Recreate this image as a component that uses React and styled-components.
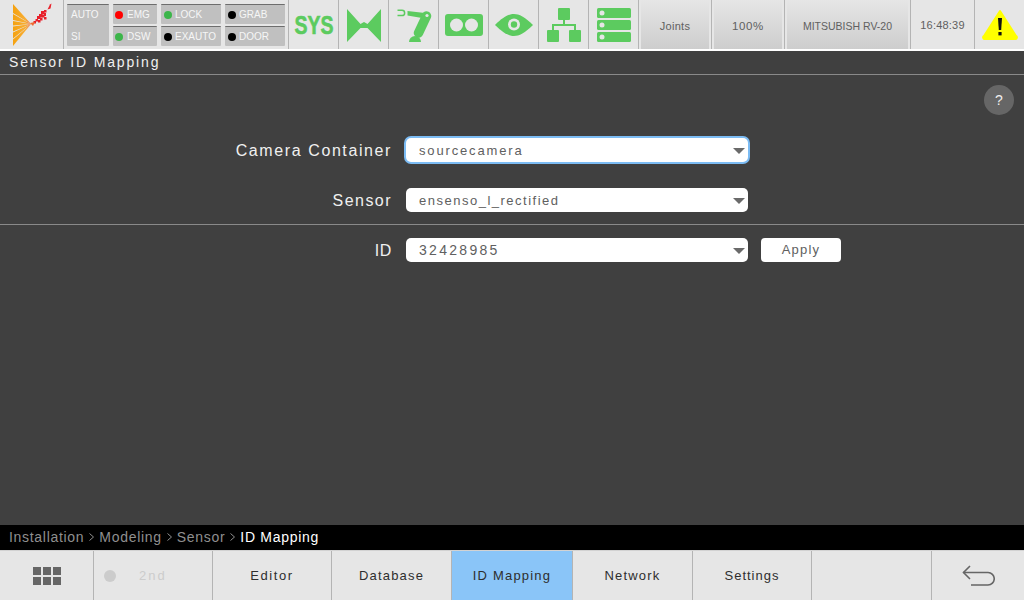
import React from 'react';
import styled, { createGlobalStyle } from 'styled-components';

const GlobalStyle = createGlobalStyle`
  html, body {
    margin: 0;
    padding: 0;
    background: #404040;
  }
  * {
    box-sizing: border-box;
  }
`;

const GREEN = '#5ccb5f';

// Page frame
const Page = styled.div`
  width: 1024px;
  height: 600px;
  display: flex;
  flex-direction: column;
  overflow: hidden;
  background: #404040;
  font-family: "Liberation Sans", Arial, sans-serif;
`;

// Top status bar
const TopBar = styled.header`
  height: 51px;
  flex: none;
  display: flex;
  background: #e6e6e6;
  border-bottom: 2px solid #ffffff;
`;

const LogoCell = styled.div`
  width: 64px;
  flex: none;
  display: flex;
  border-right: 1px solid #b4b4b4;
`;

const StatusCell = styled.div`
  width: 225px;
  flex: none;
  padding: 4px 0 0 3px;
  display: flex;
  gap: 4px;
  border-right: 1px solid #b4b4b4;
`;

const StatusColumn = styled.div`
  width: ${(p) => p.$width}px;
  display: flex;
  flex-direction: column;
  gap: 2px;
`;

const StatusTile = styled.div`
  height: 20px;
  display: flex;
  align-items: center;
  gap: ${(p) => (p.$tight ? 4 : 3)}px;
  padding-left: ${(p) => (p.$tight ? 2 : 3)}px;
  background: #c0c0c0;
  border-top: 1px solid #6d6d6d;
  border-radius: 1px;
  color: #f6f6f6;
  font-size: 10px;
`;

const ModeTile = styled.div`
  height: 42px;
  display: flex;
  flex-direction: column;
  justify-content: space-between;
  padding: 4px 0 3px 4px;
  background: #c0c0c0;
  border-top: 1px solid #6d6d6d;
  border-radius: 1px;
  color: #f6f6f6;
  font-size: 10px;
  line-height: 12px;
`;

const Dot = styled.span`
  width: 8px;
  height: 8px;
  flex: none;
  border-radius: 50%;
  background: ${(p) => p.$color};
`;

const IconCell = styled.div`
  width: 50px;
  flex: none;
  display: flex;
  align-items: center;
  justify-content: center;
  border-right: 1px solid #b4b4b4;
`;

const SysLabel = styled.span`
  display: inline-block;
  padding: 1px 0 0 1px;
  color: ${GREEN};
  font-size: 25px;
  font-weight: 700;
  -webkit-text-stroke: 0.6px ${GREEN};
  transform: scaleX(0.78);
`;

const GradientCell = styled.div`
  width: ${(p) => p.$width}px;
  flex: none;
  display: flex;
  padding: 0 2px 0 2px;
  border-right: 1px solid #b4b4b4;
`;

const GradientButton = styled.div`
  flex: 1;
  display: flex;
  align-items: center;
  justify-content: center;
  padding-top: 2px;
  background: linear-gradient(#e6e6e6, #cdcdcd);
  color: #606060;
  font-size: ${(p) => p.$size || 11}px;
  letter-spacing: ${(p) => p.$tracking || 0}px;
`;

const ClockCell = styled.div`
  width: 64px;
  flex: none;
  display: flex;
  align-items: center;
  justify-content: center;
  border-right: 1px solid #b4b4b4;
  color: #606060;
  font-size: 11px;
  letter-spacing: 0.2px;
`;

const WarningCell = styled.div`
  flex: 1;
  display: flex;
  align-items: center;
  justify-content: center;
`;

// Title
const TitleBar = styled.div`
  height: 24px;
  flex: none;
  padding: 0 0 1px 9px;
  display: flex;
  align-items: center;
  border-bottom: 1px solid #8a8a8a;
  color: #f0f0f0;
  font-size: 14px;
  letter-spacing: 1.85px;
`;

// Main form area
const Content = styled.main`
  position: relative;
  flex: 1;
  display: flex;
  flex-direction: column;
  padding-top: 63px;
`;

const HelpButton = styled.div`
  position: absolute;
  top: 10px;
  right: 10px;
  width: 30px;
  height: 30px;
  border-radius: 50%;
  display: flex;
  align-items: center;
  justify-content: center;
  background: #666666;
  color: #f0f0f0;
  font-size: 14px;
`;

const FormRow = styled.div`
  height: 24px;
  display: flex;
  align-items: center;
  margin-bottom: ${(p) => p.$gap || 0}px;
`;

const Label = styled.label`
  width: 392px;
  flex: none;
  padding-top: 2px;
  text-align: right;
  color: #f0f0f0;
  font-size: 16px;
  letter-spacing: ${(p) => p.$tracking}px;
`;

const Select = styled.div`
  width: 342px;
  height: 24px;
  margin-left: 14px;
  flex: none;
  position: relative;
  display: flex;
  align-items: center;
  padding-left: 13px;
  background: #ffffff;
  border-radius: 5px;
  color: #606060;
  font-size: ${(p) => p.$size || 13}px;
  letter-spacing: ${(p) => p.$tracking}px;
  box-shadow: ${(p) => (p.$focused ? '0 0 0 2px #7cbcf4' : 'none')};
`;

const Caret = styled.span`
  position: absolute;
  right: 3px;
  top: 10px;
  width: 0;
  height: 0;
  border-left: 6px solid transparent;
  border-right: 6px solid transparent;
  border-top: 6px solid #6a6a6a;
`;

const ApplyButton = styled.button`
  width: 80px;
  height: 24px;
  margin-left: 13px;
  padding: 0 0 2px;
  border: 0;
  border-radius: 4px;
  background: #ffffff;
  color: #606060;
  font-family: inherit;
  font-size: 13px;
  letter-spacing: 1.2px;
`;

const Divider = styled.div`
  height: 1px;
  flex: none;
  margin: 12px 0 13px;
  background: #8a8a8a;
`;

// Breadcrumb
const Breadcrumb = styled.nav`
  height: 25px;
  flex: none;
  padding: 0 0 1px 9px;
  display: flex;
  align-items: center;
  gap: 5px;
  background: #000000;
  font-size: 14px;
  letter-spacing: 0.7px;
`;

const Crumb = styled.span`
  color: ${(p) => (p.$current ? '#ffffff' : '#8f8f8f')};
`;

// Bottom tabs
const TabBar = styled.div`
  height: 50px;
  flex: none;
  display: flex;
  background: #e6e6e6;
  border-top: 1px solid #d2d2d2;
`;

const Tab = styled.div`
  width: ${(p) => p.$width}px;
  flex: none;
  display: flex;
  align-items: center;
  justify-content: center;
  border-right: 1px solid #b4b4b4;
  background: ${(p) => (p.$active ? '#8ac5f8' : 'transparent')};
  color: #2e2e2e;
  font-size: 13px;
  letter-spacing: ${(p) => p.$tracking || 1.2}px;
`;

const SecondTab = styled(Tab)`
  justify-content: flex-start;
  gap: 23px;
  padding-left: 10px;
  color: #cccccc;
  letter-spacing: 2px;
`;

const LastTab = styled(Tab)`
  flex: 1;
  border-right: 0;
`;

const SecondDot = styled.span`
  width: 12px;
  height: 12px;
  border-radius: 50%;
  background: #cccccc;
`;

const GridIcon = () => (
  <svg width="28" height="18" viewBox="0 0 28 18" fill="#666666">
    {[0, 10, 20].map((x) =>
      [0, 10].map((y) => <rect key={`${x}-${y}`} x={x} y={y} width="8" height="8" />)
    )}
  </svg>
);

const BackIcon = () => (
  <svg width="33" height="22" viewBox="0 0 33 22" fill="none" stroke="#666666" strokeWidth="1.6">
    <path d="M8 1 L1.5 7.5 L8 14" />
    <path d="M1.5 7.5 H26 A6 6 0 0 1 26 20 H9" />
  </svg>
);

const Chevron = () => (
  <svg width="5" height="8" viewBox="0 0 5 8" fill="none" stroke="#8f8f8f" strokeWidth="1">
    <path d="M0.5 0.5 L4.5 4 L0.5 7.5" />
  </svg>
);

const Logo = () => (
  <svg width="63" height="49" viewBox="0 0 63 49">
    <defs>
      <linearGradient id="fanFill" x1="13" y1="0" x2="31" y2="0" gradientUnits="userSpaceOnUse">
        <stop offset="0" stopColor="#f5a20f" />
        <stop offset="0.7" stopColor="#f7ad35" />
        <stop offset="1" stopColor="#ef6a3a" />
      </linearGradient>
    </defs>
    <g fill="url(#fanFill)">
      <path d="M13 4 L31 24 L13 13 Z" />
      <path d="M13 14 L31 24 L13 20 Z" />
      <path d="M13 21 L31 24 L13 25.5 Z" />
      <path d="M13 26.5 L31 24 L13 31.5 Z" />
      <path d="M13 32.5 L31 24 L13 38.5 Z" />
      <path d="M13 39.5 L31 24 L13 46 Z" />
    </g>
    <g fill="#e8202a">
      <path d="M50 4.5 L51.5 3.5 L50.5 8.5 L47.5 9.5 Z" />
      <rect x="44" y="10" width="2.5" height="2.5" />
      <rect x="41" y="11" width="3.5" height="3.5" />
      <rect x="44" y="13" width="2" height="3" />
      <rect x="39" y="14" width="3.5" height="3.5" />
      <rect x="42" y="15" width="2.5" height="2.5" />
      <rect x="37" y="16" width="3.5" height="3" />
      <rect x="44" y="17" width="2.5" height="2.5" />
      <rect x="40" y="18" width="2.5" height="2.5" />
      <rect x="35.5" y="19" width="2.5" height="2.5" />
      <rect x="38" y="20" width="2.5" height="2.5" />
      <rect x="33.5" y="21" width="2.5" height="2.5" />
      <path d="M30 23 L35 22 L33 26 Z" fill="#ee6a30" />
    </g>
  </svg>
);

const MIcon = () => (
  <svg width="36" height="36" viewBox="0 0 36 36" fill={GREEN}>
    <path d="M1 2 L14.5 17 L18 15 L21.5 17 L35 2 V35 L21.5 21 H14.5 L1 35 Z" />
  </svg>
);

const RobotIcon = () => (
  <svg width="36" height="36" viewBox="0 0 36 36" fill={GREEN}>
    <path d="M1.5 2.5 H6 A3.4 3.4 0 0 1 6 9.3 H1.5 V7.8 H6 A1.9 1.9 0 0 0 6 4 H1.5 Z" />
    <path d="M11.5 4 L29 6 L26 11 L11.5 8.5 Z" />
    <path d="M30.5 9 L22.5 26" stroke={GREEN} strokeWidth="9.5" strokeLinecap="round" />
    <circle cx="31" cy="8.5" r="1.6" fill="#e6e6e6" />
    <path d="M13 35 A6 6 0 0 1 25 35 Z" />
  </svg>
);

const ContainerIcon = () => (
  <svg width="38" height="22" viewBox="0 0 38 22">
    <rect width="38" height="22" rx="3" fill={GREEN} />
    <circle cx="11.5" cy="11" r="6.5" fill="#e6e6e6" />
    <circle cx="26.5" cy="11" r="6.5" fill="#e6e6e6" />
  </svg>
);

const EyeIcon = () => (
  <svg width="38" height="22" viewBox="0 0 38 22">
    <path d="M0 11 C8 3 14 0 19 0 C24 0 30 3 38 11 C30 19 24 22 19 22 C14 22 8 19 0 11 Z" fill={GREEN} />
    <circle cx="19" cy="10.5" r="6" fill="#e6e6e6" />
    <circle cx="19" cy="10.5" r="3.2" fill={GREEN} />
  </svg>
);

const NetworkIcon = () => (
  <svg width="34" height="34" viewBox="0 0 34 34" fill={GREEN}>
    <rect x="11" y="0" width="12" height="12" rx="1" />
    <rect x="0" y="22" width="12" height="12" rx="1" />
    <rect x="22" y="22" width="12" height="12" rx="1" />
    <path d="M16 12 H18 V16 H29 V22 H27 V18 H7 V22 H5 V16 H16 Z" />
  </svg>
);

const ServerIcon = () => (
  <svg width="34" height="34" viewBox="0 0 34 34">
    {[0, 12, 24].map((y) => (
      <g key={y}>
        <rect x="0" y={y} width="34" height="10" rx="1.5" fill={GREEN} />
        <circle cx="5" cy={y + 5} r="2.5" fill="#e6e6e6" />
      </g>
    ))}
  </svg>
);

const WarningIcon = () => (
  <svg width="36" height="31" viewBox="0 0 36 31">
    <path d="M18 2 L34 27 A1.6 1.6 0 0 1 33 30 H3 A1.6 1.6 0 0 1 2 27 Z" fill="#ffff00" stroke="#ffff00" strokeWidth="2" strokeLinejoin="round" />
    <path d="M16 9 H20 L19.2 21 H16.8 Z" fill="#111111" />
    <rect x="16.4" y="23" width="3.2" height="3.4" fill="#111111" />
  </svg>
);

const App = () => {
  return (
    <Page>
      <GlobalStyle />
      <TopBar>
        <LogoCell>
          <Logo />
        </LogoCell>
        <StatusCell>
          <StatusColumn $width={42}>
            <ModeTile>
              <span>AUTO</span>
              <span>SI</span>
            </ModeTile>
          </StatusColumn>
          <StatusColumn $width={44}>
            <StatusTile $tight><Dot $color="#ff0000" />EMG</StatusTile>
            <StatusTile $tight><Dot $color="#3cb54a" />DSW</StatusTile>
          </StatusColumn>
          <StatusColumn $width={60}>
            <StatusTile><Dot $color="#3cb54a" />LOCK</StatusTile>
            <StatusTile><Dot $color="#000000" />EXAUTO</StatusTile>
          </StatusColumn>
          <StatusColumn $width={60}>
            <StatusTile><Dot $color="#000000" />GRAB</StatusTile>
            <StatusTile><Dot $color="#000000" />DOOR</StatusTile>
          </StatusColumn>
        </StatusCell>
        <IconCell><SysLabel>SYS</SysLabel></IconCell>
        <IconCell><MIcon /></IconCell>
        <IconCell><RobotIcon /></IconCell>
        <IconCell><ContainerIcon /></IconCell>
        <IconCell><EyeIcon /></IconCell>
        <IconCell><NetworkIcon /></IconCell>
        <IconCell><ServerIcon /></IconCell>
        <GradientCell $width={73}><GradientButton $tracking={0.3}>Joints</GradientButton></GradientCell>
        <GradientCell $width={73}><GradientButton $size={11.5} $tracking={0.6}>100%</GradientButton></GradientCell>
        <GradientCell $width={126}><GradientButton $size={10.5}>MITSUBISH RV-20</GradientButton></GradientCell>
        <ClockCell>16:48:39</ClockCell>
        <WarningCell><WarningIcon /></WarningCell>
      </TopBar>

      <TitleBar>Sensor ID Mapping</TitleBar>

      <Content>
        <HelpButton>?</HelpButton>
        <FormRow $gap={26}>
          <Label $tracking={1.6}>Camera Container</Label>
          <Select $focused $tracking={1.85}>sourcecamera<Caret /></Select>
        </FormRow>
        <FormRow>
          <Label $tracking={1.45}>Sensor</Label>
          <Select $tracking={1.5}>ensenso_l_rectified<Caret /></Select>
        </FormRow>
        <Divider />
        <FormRow>
          <Label $tracking={0.6}>ID</Label>
          <Select $size={14} $tracking={2.3}>32428985<Caret /></Select>
          <ApplyButton>Apply</ApplyButton>
        </FormRow>
      </Content>

      <Breadcrumb>
        <Crumb>Installation</Crumb>
        <Chevron />
        <Crumb>Modeling</Crumb>
        <Chevron />
        <Crumb>Sensor</Crumb>
        <Chevron />
        <Crumb $current>ID Mapping</Crumb>
      </Breadcrumb>

      <TabBar>
        <Tab $width={94}><GridIcon /></Tab>
        <SecondTab $width={119}><SecondDot />2nd</SecondTab>
        <Tab $width={119} $tracking={1.6}>Editor</Tab>
        <Tab $width={120}>Database</Tab>
        <Tab $width={121} $active>ID Mapping</Tab>
        <Tab $width={120}>Network</Tab>
        <Tab $width={119} $tracking={1}>Settings</Tab>
        <Tab $width={120} />
        <LastTab><BackIcon /></LastTab>
      </TabBar>
    </Page>
  );
};

export default App;
